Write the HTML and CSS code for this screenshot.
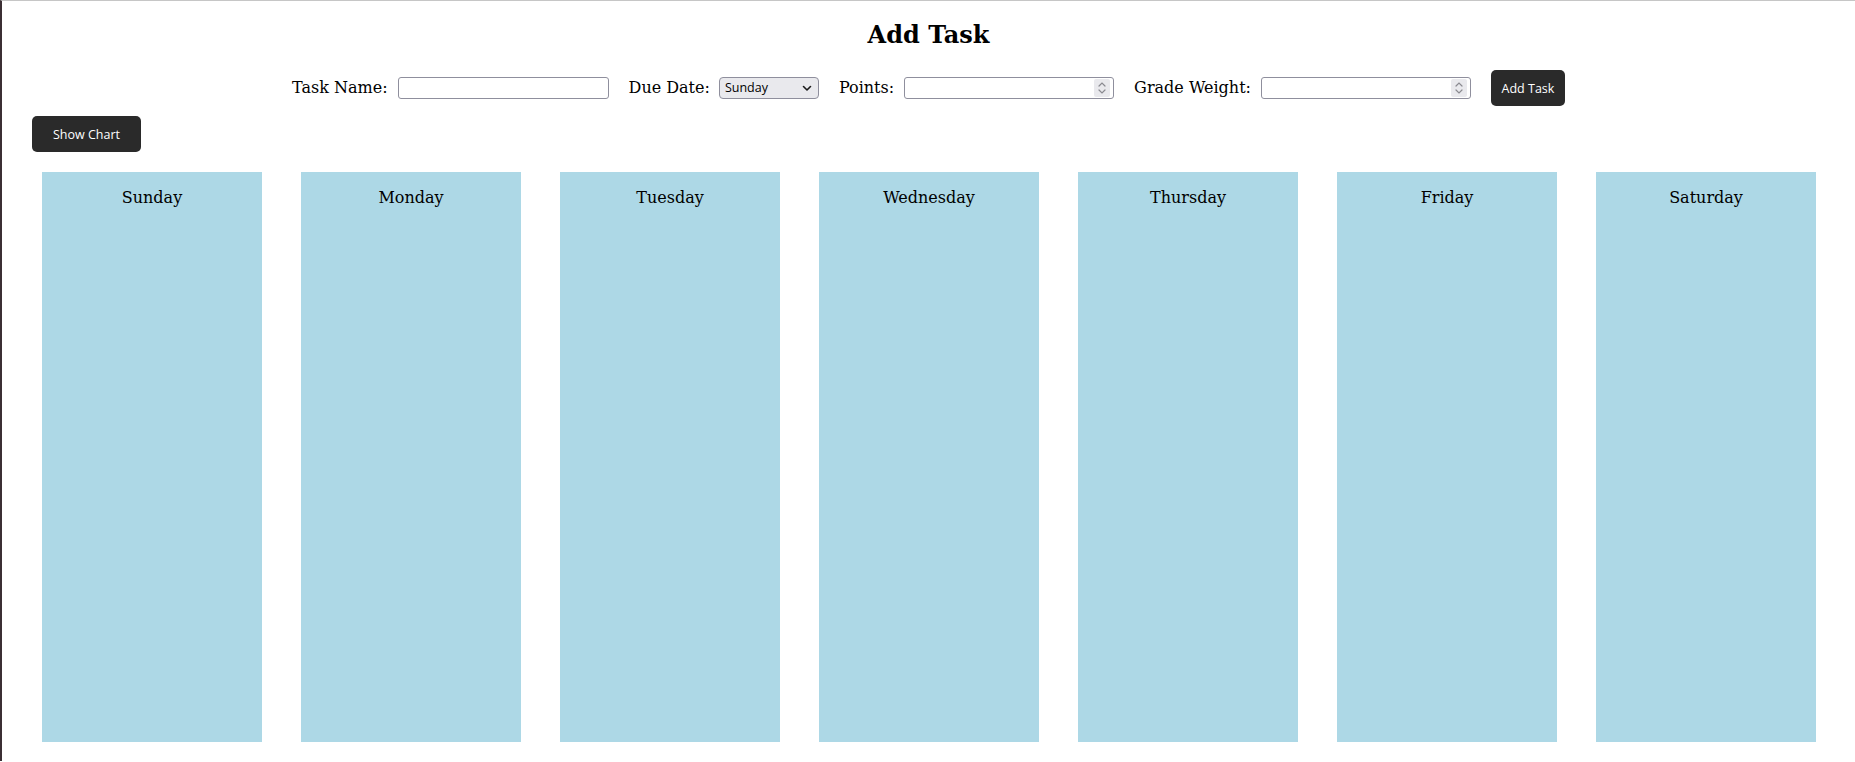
FILE: index.html
```html
<!DOCTYPE html>
<html lang="en">
<head>
<meta charset="utf-8">
<title>Add Task</title>
<link rel="stylesheet" href="styles.css">
</head>
<body>
<div class="page">
  <h2 class="title">Add Task</h2>
  <form class="form-row">
    <div class="field">
      <label class="label" for="taskName">Task Name:</label>
      <input class="text-input" id="taskName" type="text">
    </div>
    <div class="field field-date">
      <label class="label" for="dueDate">Due Date:</label>
      <div class="select-box" id="dueDate">
        <span class="select-value">Sunday</span>
        <svg class="select-arrow" width="10" height="7" viewBox="0 0 10 7"><path d="M1.5 1.5 L5 5 L8.5 1.5" fill="none" stroke="#1b1b1b" stroke-width="1.6" stroke-linecap="round" stroke-linejoin="round"/></svg>
      </div>
    </div>
    <div class="field">
      <label class="label" for="points">Points:</label>
      <div class="number-box">
        <input class="number-input" id="points" type="text">
        <span class="spinner">
          <svg width="8" height="5" viewBox="0 0 8 5"><path d="M1 4 L4 1 L7 4" fill="none" stroke="#8a8a90" stroke-width="1.2" stroke-linecap="round"/></svg>
          <svg width="8" height="5" viewBox="0 0 8 5"><path d="M1 1 L4 4 L7 1" fill="none" stroke="#8a8a90" stroke-width="1.2" stroke-linecap="round"/></svg>
        </span>
      </div>
    </div>
    <div class="field">
      <label class="label" for="weight">Grade Weight:</label>
      <div class="number-box">
        <input class="number-input" id="weight" type="text">
        <span class="spinner">
          <svg width="8" height="5" viewBox="0 0 8 5"><path d="M1 4 L4 1 L7 4" fill="none" stroke="#8a8a90" stroke-width="1.2" stroke-linecap="round"/></svg>
          <svg width="8" height="5" viewBox="0 0 8 5"><path d="M1 1 L4 4 L7 1" fill="none" stroke="#8a8a90" stroke-width="1.2" stroke-linecap="round"/></svg>
        </span>
      </div>
    </div>
    <button class="btn btn-add" type="button">Add Task</button>
  </form>
  <div class="toolbar">
    <button class="btn btn-chart" type="button">Show Chart</button>
  </div>
  <div class="board">
    <div class="day"><div class="day-name">Sunday</div></div>
    <div class="day"><div class="day-name">Monday</div></div>
    <div class="day"><div class="day-name">Tuesday</div></div>
    <div class="day"><div class="day-name">Wednesday</div></div>
    <div class="day"><div class="day-name">Thursday</div></div>
    <div class="day"><div class="day-name">Friday</div></div>
    <div class="day"><div class="day-name">Saturday</div></div>
  </div>
</div>
</body>
</html>
```

FILE: styles.css
```css
html, body {
  margin: 0;
  padding: 0;
  background: #ffffff;
}

body {
  font-family: "DejaVu Serif", serif;
  font-size: 16px;
  color: #000;
  border-top: 1px solid #c6c6c6;
  border-left: 2px solid #3b2f34;
  height: 761px;
  box-sizing: border-box;
  overflow: hidden;
}

.page {
  padding-top: 20px;
}

.title {
  margin: 0 0 21px;
  font-size: 24px;
  line-height: 28px;
  font-weight: bold;
  text-align: center;
}

.form-row {
  margin: 0;
  display: flex;
  justify-content: center;
  align-items: center;
  gap: 20px;
  height: 36px;
}

.field {
  display: flex;
  align-items: center;
  gap: 10px;
}

.field-date {
  gap: 9px;
}

.label {
  font-size: 16px;
  line-height: 19px;
  margin-top: -2px;
}

.text-input {
  box-sizing: border-box;
  width: 211px;
  height: 22px;
  border: 1px solid #8f8f9d;
  border-radius: 3px;
  padding: 0 4px;
  margin: 0;
  background: #fff;
  outline: none;
}

.select-box {
  box-sizing: border-box;
  width: 100px;
  height: 22px;
  border: 1px solid #8f8f9d;
  border-radius: 4px;
  background: #e9e9ed;
  display: flex;
  align-items: center;
  justify-content: space-between;
  padding: 0 6px 0 5px;
  font-family: "Open Sans", "Noto Sans", sans-serif;
  font-size: 12.5px;
  color: #000;
}

.select-value {
  line-height: 16px;
}

.number-box {
  box-sizing: border-box;
  width: 210px;
  height: 22px;
  border: 1px solid #8f8f9d;
  border-radius: 3px;
  background: #fff;
  display: flex;
  align-items: center;
  padding: 0 3px 0 0;
}

.number-input {
  flex: 1;
  min-width: 0;
  height: 18px;
  border: none;
  padding: 0 4px;
  margin: 0;
  outline: none;
  background: transparent;
}

.spinner {
  width: 16px;
  height: 18px;
  background: #e9e9ed;
  border-radius: 2px;
  display: flex;
  flex-direction: column;
  align-items: center;
  justify-content: center;
  gap: 2px;
}

.spinner svg {
  display: block;
}

.btn {
  font-family: "Open Sans", "Noto Sans", sans-serif;
  font-size: 12.5px;
  color: #ffffff;
  background: #2a2a2a;
  border: none;
  border-radius: 5px;
  height: 36px;
  padding: 0;
  margin: 0;
  cursor: pointer;
}

.btn-add {
  width: 74px;
}

.btn-chart {
  width: 109px;
}

.toolbar {
  margin-top: 10px;
  padding-left: 30px;
  display: flex;
}

.board {
  margin-top: 20px;
  padding-left: 40px;
  display: flex;
  gap: 39px;
}

.day {
  width: 220px;
  height: 570px;
  background: #add8e6;
  text-align: center;
  box-sizing: border-box;
  padding-top: 16px;
}

.day-name {
  font-size: 16px;
  line-height: 19px;
}
```
